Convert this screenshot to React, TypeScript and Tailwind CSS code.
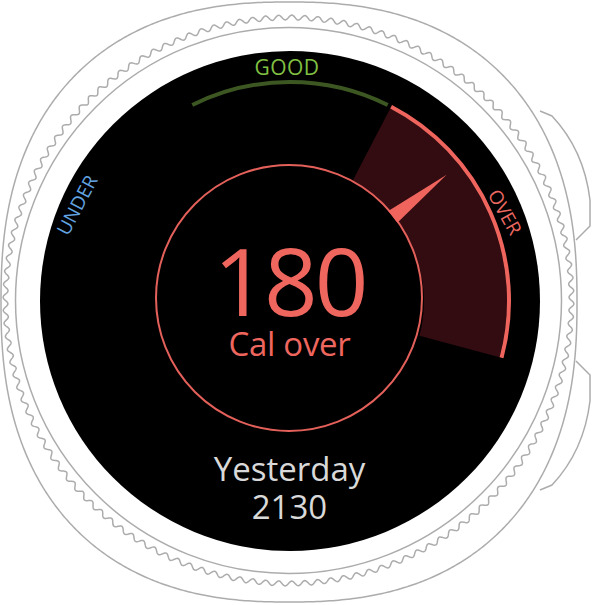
import React from "react";

const pt = (cx: number, cy: number, r: number, deg: number) => {
  const t = (deg * Math.PI) / 180;
  return [cx + r * Math.sin(t), cy - r * Math.cos(t)];
};

const arc = (cx: number, cy: number, r: number, a0: number, a1: number) => {
  const [x0, y0] = pt(cx, cy, r, a0);
  const [x1, y1] = pt(cx, cy, r, a1);
  const large = a1 - a0 > 180 ? 1 : 0;
  return `M${x0.toFixed(2)} ${y0.toFixed(2)} A${r} ${r} 0 ${large} 1 ${x1.toFixed(2)} ${y1.toFixed(2)}`;
};

const sector = (cx: number, cy: number, ri: number, ro: number, a0: number, a1: number) => {
  const [x0, y0] = pt(cx, cy, ro, a0);
  const [x1, y1] = pt(cx, cy, ro, a1);
  const [x2, y2] = pt(cx, cy, ri, a1);
  const [x3, y3] = pt(cx, cy, ri, a0);
  return `M${x0} ${y0} A${ro} ${ro} 0 0 1 ${x1} ${y1} L${x2} ${y2} A${ri} ${ri} 0 0 0 ${x3} ${y3} Z`;
};

const wavy = (() => {
  const cx = 288.5, cy = 300.5, r = 283, amp = 2.4, n = 136, steps = 2720;
  let d = "";
  for (let i = 0; i <= steps; i++) {
    const t = (i / steps) * Math.PI * 2;
    const rr = r + amp * Math.sin(n * t);
    const x = cx + rr * Math.cos(t);
    const y = cy + rr * Math.sin(t);
    d += (i === 0 ? "M" : "L") + x.toFixed(2) + " " + y.toFixed(2);
  }
  return d + "Z";
})();

const squircle = (() => {
  const cx = 289, cy = 302, a = 288, b = 300, n = 2.4, steps = 720;
  let d = "";
  for (let i = 0; i <= steps; i++) {
    const t = (i / steps) * Math.PI * 2;
    const c = Math.cos(t), s = Math.sin(t);
    const x = cx + a * Math.sign(c) * Math.pow(Math.abs(c), 2 / n);
    const y = cy + b * Math.sign(s) * Math.pow(Math.abs(s), 2 / n);
    d += (i === 0 ? "M" : "L") + x.toFixed(2) + " " + y.toFixed(2);
  }
  return d + "Z";
})();

function Case() {
  return (
    <svg className="absolute inset-0" width="592" height="605" viewBox="0 0 592 605" fill="none">
      <g stroke="#acacac" strokeWidth="1.5">
        <path d={squircle} />
        <path d="M540 111 L552 116 Q584 150 590 200 L590 226 L576 240" />
        <path d="M576 361 L590 375 L590 401 Q584 451 552 485 L540 490" />
        <path d={wavy} />
        <circle cx="288.5" cy="300.5" r="273" />
      </g>
    </svg>
  );
}

function Gauge() {
  const cx = 250, cy = 250;
  const icx = 249, icy = 247, ir = 133;
  const na = 52;
  const [tx, ty] = pt(icx, icy, 200, na);
  const [b1x, b1y] = pt(icx, icy, ir - 1, na - 3.2);
  const [b2x, b2y] = pt(icx, icy, ir - 1, na + 3.2);
  return (
    <svg className="absolute inset-0" width="500" height="500" viewBox="0 0 500 500" fill="none">
      <path d={sector(cx, cy, 134, 217, 27.5, 105)} fill="#330c12" />
      <path d={arc(cx, cy, 219, -26.5, 26.5)} stroke="#3d5723" strokeWidth="4" />
      <path d={arc(cx, cy, 219, 27.5, 105)} stroke="#ef655d" strokeWidth="4" />
      <circle cx={icx} cy={icy} r={ir} stroke="#e4605a" strokeWidth="2" />
      <path d={`M${b1x} ${b1y} L${tx} ${ty} L${b2x} ${b2y} Z`} fill="#ef655d" />
      <g fontFamily="'Open Sans', sans-serif">
        <text x="247" y="24" fontSize="21" fill="#80c043" textAnchor="middle" letterSpacing="0.5">GOOD</text>
        <text x="37" y="154" fontSize="19" fill="#62a4e0" textAnchor="middle" dominantBaseline="central" transform="rotate(-62 37 154)">UNDER</text>
        <text x="465" y="161" fontSize="19" fill="#ec6961" textAnchor="middle" dominantBaseline="central" transform="rotate(61 465 161)">OVER</text>
      </g>
    </svg>
  );
}

export default function App() {
  return (
    <div className="relative w-[592px] h-[605px] bg-white overflow-hidden pl-[40px] pt-[51px]" style={{ fontFamily: "'Open Sans', sans-serif" }}>
      <Case />
      <div className="relative w-[500px] h-[500px] rounded-full bg-black">
        <Gauge />
        <div className="relative flex flex-col items-center pt-[189px] pr-[1px]">
          <div className="text-[94px] leading-[80px] tracking-[-3px] text-[#ef665f]">180</div>
          <div className="mt-[7px] text-[33px] leading-[34px] tracking-[-0.3px] text-[#ef665f]">Cal over</div>
          <div className="mt-[89px] text-[33px] leading-[38px] text-[#d9d9d9]">Yesterday</div>
          <div className="text-[33px] leading-[38px] text-[#d9d9d9]">2130</div>
        </div>
      </div>
    </div>
  );
}
